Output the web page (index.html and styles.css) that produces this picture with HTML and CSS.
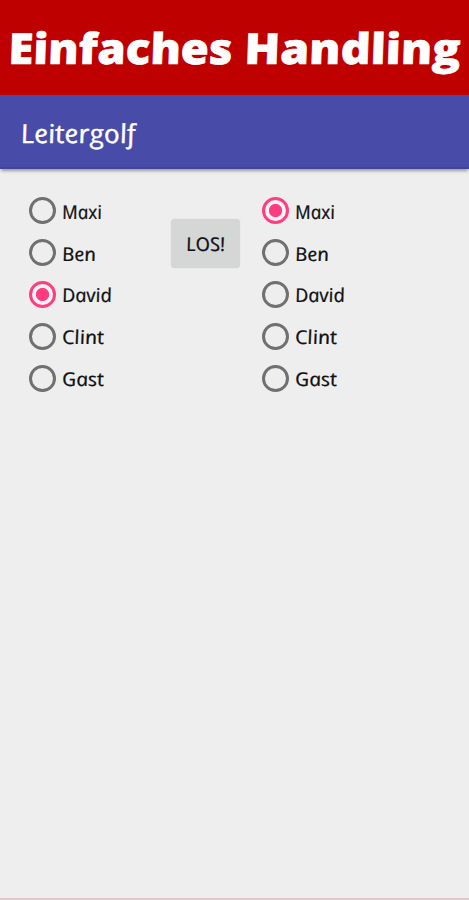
FILE: index.html
```html
<!DOCTYPE html>
<html lang="de">
<head>
<meta charset="utf-8">
<title>Leitergolf</title>
<link rel="stylesheet" href="styles.css">
</head>
<body>
<header class="banner">
  <svg class="banner-text" viewBox="0 0 469 95"><text transform="translate(8 63.5) skewX(-2)" textLength="224" lengthAdjust="spacingAndGlyphs">Einfaches</text><text transform="translate(244 63.5) skewX(-2)" textLength="216" lengthAdjust="spacingAndGlyphs">Handling</text></svg>
</header>
<div class="appbar">
  <svg class="appbar-text" viewBox="0 0 130 74"><text transform="translate(0 48) skewX(11)" textLength="115" lengthAdjust="spacingAndGlyphs">Leitergolf</text></svg>
</div>
<main class="content">
  <div class="group">
    <div class="option"><i class="radio"></i><svg class="label"><text transform="translate(0 20.5) skewX(11)" textLength="40" lengthAdjust="spacingAndGlyphs">Maxi</text></svg></div>
    <div class="option"><i class="radio"></i><svg class="label"><text transform="translate(0 20.5) skewX(11)" textLength="34" lengthAdjust="spacingAndGlyphs">Ben</text></svg></div>
    <div class="option"><i class="radio checked"></i><svg class="label"><text transform="translate(0 20.5) skewX(11)" textLength="50" lengthAdjust="spacingAndGlyphs">David</text></svg></div>
    <div class="option"><i class="radio"></i><svg class="label"><text transform="translate(0 20.5) skewX(11)" textLength="42" lengthAdjust="spacingAndGlyphs">Clint</text></svg></div>
    <div class="option"><i class="radio"></i><svg class="label"><text transform="translate(0 20.5) skewX(11)" textLength="42" lengthAdjust="spacingAndGlyphs">Gast</text></svg></div>
  </div>
  <button class="go"><svg class="go-text" viewBox="0 0 69 49"><text transform="translate(16 31.5) skewX(11)" textLength="39" lengthAdjust="spacingAndGlyphs">LOS!</text></svg></button>
  <div class="group">
    <div class="option"><i class="radio checked"></i><svg class="label"><text transform="translate(0 20.5) skewX(11)" textLength="40" lengthAdjust="spacingAndGlyphs">Maxi</text></svg></div>
    <div class="option"><i class="radio"></i><svg class="label"><text transform="translate(0 20.5) skewX(11)" textLength="34" lengthAdjust="spacingAndGlyphs">Ben</text></svg></div>
    <div class="option"><i class="radio"></i><svg class="label"><text transform="translate(0 20.5) skewX(11)" textLength="50" lengthAdjust="spacingAndGlyphs">David</text></svg></div>
    <div class="option"><i class="radio"></i><svg class="label"><text transform="translate(0 20.5) skewX(11)" textLength="42" lengthAdjust="spacingAndGlyphs">Clint</text></svg></div>
    <div class="option"><i class="radio"></i><svg class="label"><text transform="translate(0 20.5) skewX(11)" textLength="42" lengthAdjust="spacingAndGlyphs">Gast</text></svg></div>
  </div>
</main>
<footer class="edge"></footer>
</body>
</html>
```
FILE: styles.css
```css
* { box-sizing: border-box; }
body {
  margin: 0;
  height: 900px;
  display: flex;
  flex-direction: column;
  overflow: hidden;
  background: #eee;
  font-family: "Open Sans", "Noto Sans", sans-serif;
}
svg { display: block; overflow: visible; }
.banner { height: 95px; flex: none; background: #be0000; }
.banner-text { width: 469px; height: 95px; fill: #fff; stroke: #fff; stroke-width: .6px; font-size: 42.5px; font-weight: 800; }
.appbar {
  height: 74px;
  flex: none;
  padding-left: 22px;
  background: #484ca8;
  border-bottom: 2px solid #4045a0;
  box-shadow: 0 3px 3px -1px rgba(0, 0, 0, .35);
}
.appbar-text { width: 130px; height: 74px; fill: #fff; stroke: #fff; stroke-width: .4px; font-size: 26px; font-style: italic; font-weight: 500; }
.content { flex: 1; display: flex; align-items: flex-start; padding: 21px 0 0 29px; }
.group { width: 142px; }
.option { height: 41.8px; display: flex; align-items: center; gap: 7px; }
.radio {
  width: 27px;
  height: 27px;
  flex: none;
  border: 3px solid #707070;
  border-radius: 50%;
}
.radio.checked {
  border-color: #ff3d80;
  background: radial-gradient(circle, #ff3d80 6.2px, #f7f2f4 7px);
}
.label { width: 60px; height: 26px; fill: #111; stroke: #111; stroke-width: .25px; font-size: 19px; font-style: italic; font-weight: 500; }
.go {
  width: 69px;
  height: 49px;
  margin: 29px 22px 0 0;
  padding: 0;
  border: 0;
  border-radius: 4px;
  background: #d5d7d7;
  font-family: inherit;
  box-shadow: 0 0 1px #c8caca;
}
.go-text { width: 69px; height: 49px; fill: #111; stroke: #111; stroke-width: .25px; font-size: 19px; font-style: italic; font-weight: 500; }
.edge { height: 2px; flex: none; background: #dfc4cb; }
```
